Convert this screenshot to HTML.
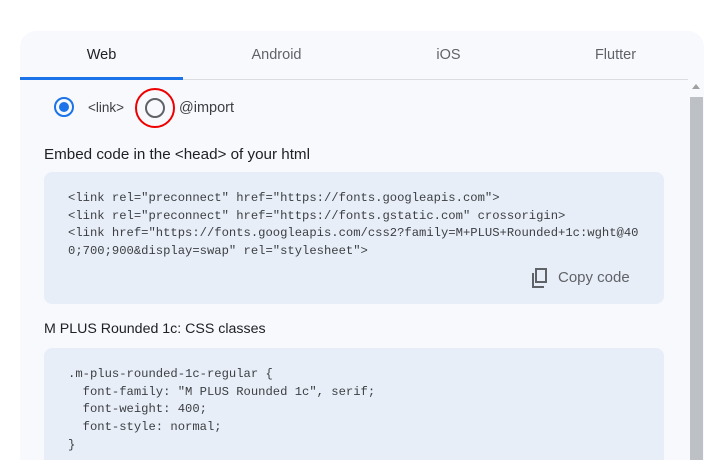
<!DOCTYPE html>
<html><head><style>
body{margin:0;width:728px;height:460px;background:#fff;overflow:hidden;font-family:"Liberation Sans",sans-serif;position:relative}
.panel{position:absolute;left:20px;top:31px;width:684px;height:429px;background:#f8f9fd;border-radius:16px 16px 0 0;overflow:hidden}
.tab{position:absolute;top:16px;font-size:14.5px;color:#5f6368;text-align:center;width:163px}
.line{position:absolute;left:0;top:48px;width:668px;height:1px;background:#dadce0}
.ul{position:absolute;left:0;top:46px;width:163px;height:3px;background:#1a73e8}
.sb{position:absolute;left:670px;top:66px;width:13px;height:363px;background:#bdc1c6}
.arrow{position:absolute;left:672px;top:53px;width:0;height:0;border-left:4px solid transparent;border-right:4px solid transparent;border-bottom:5px solid #a0a0a0}
.t{position:absolute;font-size:14px;color:#202124}
.code{position:absolute;left:24px;width:620px;background:#e8eef8;border-radius:8px}
pre{margin:0;font-family:"Liberation Mono",monospace;font-size:12.2px;line-height:17.7px;color:#3c4043;position:absolute;left:24px}
</style></head><body>
<div class="panel">
<div class="tab" style="left:0;color:#202124">Web</div>
<div class="tab" style="left:175px">Android</div>
<div class="tab" style="left:347px">iOS</div>
<div class="tab" style="left:514px">Flutter</div>
<div class="line"></div><div class="ul"></div>
<div class="arrow"></div><div class="sb"></div>
<div style="position:absolute;left:34px;top:66px;width:20px;height:20px;border:2.5px solid #1a73e8;border-radius:50%;box-sizing:border-box"><div style="position:absolute;left:2.5px;top:2.5px;width:10px;height:10px;background:#1a73e8;border-radius:50%"></div></div>
<div class="t" style="left:68px;top:69px;font-size:13.5px;color:#3c4043">&lt;link&gt;</div>
<div style="position:absolute;left:115px;top:57px;width:40px;height:40px;border:2px solid #e00;border-radius:50%;box-sizing:border-box"></div>
<div style="position:absolute;left:125px;top:67px;width:20px;height:20px;border:2px solid #5f6368;border-radius:50%;box-sizing:border-box"></div>
<div class="t" style="left:159px;top:69px;font-size:14.5px;color:#3c4043">@import</div>
<div class="t" style="left:24px;top:115px;font-size:15.2px">Embed code in the &lt;head&gt; of your html</div>
<div class="code" style="top:141px;height:132px">
<pre style="top:18px">&lt;link rel="preconnect" href="https://fonts.googleapis.com"&gt;
&lt;link rel="preconnect" href="https://fonts.gstatic.com" crossorigin&gt;
&lt;link href="https://fonts.googleapis.com/css2?family=M+PLUS+Rounded+1c:wght@40
0;700;900&amp;display=swap" rel="stylesheet"&gt;</pre>
<svg style="position:absolute;left:487px;top:96px" width="18" height="20" viewBox="0 0 18 20"><path d="M5 1h10v13H5z M2 5v14h11" fill="none" stroke="#5f6368" stroke-width="2"/></svg>
<div style="position:absolute;left:514px;top:97px;font-size:15px;color:#5f6368">Copy code</div>
</div>
<div class="t" style="left:24px;top:290px;font-size:14.2px">M PLUS Rounded 1c: CSS classes</div>
<div class="code" style="top:317px;height:112px;border-radius:8px 8px 0 0;overflow:hidden">
<pre style="top:18px">.m-plus-rounded-1c-regular {
  font-family: "M PLUS Rounded 1c", serif;
  font-weight: 400;
  font-style: normal;
}</pre>
</div>
</div>
</body></html>
